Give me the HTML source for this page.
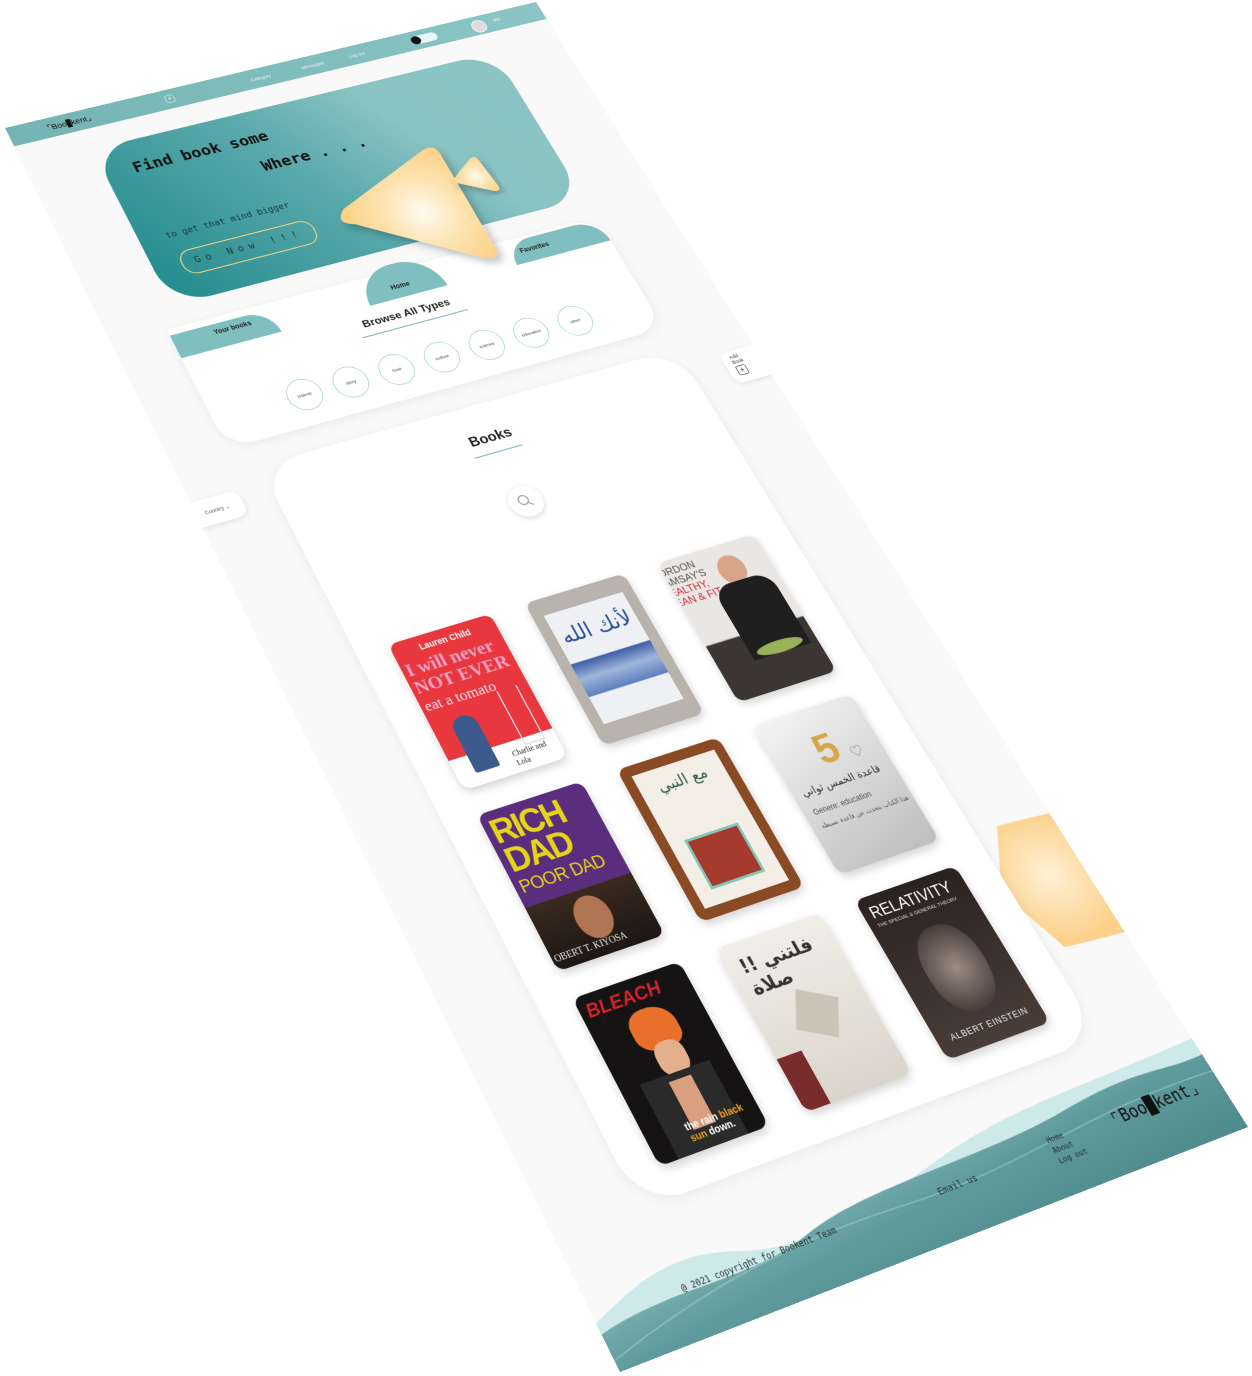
<!DOCTYPE html>
<html><head><meta charset="utf-8">
<style>
html,body{margin:0;padding:0;}
body{width:1252px;height:1376px;overflow:hidden;background:#fff;position:relative;font-family:"Liberation Sans","Noto Sans CJK SC",sans-serif;}
#pg{position:absolute;left:0;top:0;width:1000px;height:2120px;background:#f9f9f9;transform-origin:0 0;
transform:matrix3d(0.56201,-0.12588,0,0.000057855, 0.225741,0.444382,0,-0.000103799, 0,0,1,0, 5,128,0,1);overflow:hidden;}
.abs{position:absolute;}
.hdr{left:0;top:0;width:1000px;height:40px;background:linear-gradient(90deg,#74b4b4,#8cc5c5);}
.hdr span{position:absolute;font-size:9px;color:#eef;top:16px;}
.hero{left:122px;top:82px;width:752px;height:328px;border-radius:70px;background:linear-gradient(60deg,#238b8d 0%,#5aa9ab 45%,#8ac3c3 70%,#8cc4c4 100%);z-index:3;overflow:visible;}
.mono{font-family:"DejaVu Sans Mono","Liberation Mono",monospace;color:#111;}
.card{background:#fff;border-radius:60px;box-shadow:0 4px 18px rgba(0,0,0,.07);}
.tab{background:#7fbfbf;color:#222;font-size:12px;font-weight:bold;}
.pill{width:58px;height:58px;border:1.5px solid #7fbfbf;border-radius:50%;background:#fff;font-size:8px;color:#444;display:flex;align-items:center;justify-content:center;box-sizing:border-box;}
.bk{position:absolute;width:172px;height:249px;border-radius:14px;overflow:hidden;box-shadow:0 6px 14px rgba(0,0,0,.18);}
</style></head><body>
<div id="pg">
  <!-- header -->
  <div class="abs hdr">
    <div class="abs" style="left:68px;top:11px;font-size:15px;color:#111;">⌜Boo<b style="background:#111;color:#111;">k</b>kent⌟</div>
    <div class="abs" style="left:282px;top:12px;width:14px;height:14px;border:1.5px solid #e8f4f4;border-radius:3px;color:#fff;font-size:12px;line-height:13px;text-align:center;">+</div>
    <span style="left:440px;">Category</span>
    <span style="left:535px;">Messages</span>
    <span style="left:625px;">Log out</span>
    <div class="abs" style="left:745px;top:11px;width:50px;height:18px;border-radius:9px;background:#e9f6fb;"><div style="width:18px;height:18px;border-radius:50%;background:#111;"></div></div>
    <div class="abs" style="left:862px;top:8px;width:24px;height:24px;border-radius:50%;background:#ddd;border:2px solid #eee;"></div>
    <span style="left:905px;top:12px;color:#f4f4f4;">ahh</span>
  </div>

  <!-- hero -->
  <div class="abs hero">
    <div class="abs mono" style="left:50px;top:38px;font-size:29px;font-weight:bold;">Find book some</div>
    <div class="abs mono" style="left:258px;top:96px;font-size:29px;font-weight:bold;">Where . . .</div>
    <div class="abs mono" style="left:46px;top:188px;font-size:16px;color:#1a3a3a;">to get that mind bigger</div>
    <div class="abs mono" style="left:48px;top:233px;width:235px;height:45px;border:2.5px solid #f2cf7c;border-radius:22px;font-size:17px;letter-spacing:9px;line-height:45px;text-align:center;color:#1d3b3b;">Go Now !!!</div>
    <svg class="abs" style="left:325px;top:110px;overflow:visible" width="300" height="260">
      <defs>
        <radialGradient id="tg" cx="0.62" cy="0.5" r="0.6"><stop offset="0" stop-color="#fffaf0"/><stop offset="0.5" stop-color="#fde3b0"/><stop offset="1" stop-color="#fbd188"/></radialGradient>
        <filter id="sh"><feDropShadow dx="4" dy="10" stdDeviation="8" flood-color="#000" flood-opacity=".25"/></filter>
      </defs>
      <path d="M40 205 Q8 195 36 172 L215 100 Q246 88 245 118 L244 315 Q244 342 216 329 Z" transform="translate(-10,-50)" fill="url(#tg)" filter="url(#sh)"/>
      <path d="M245 208 Q230 212 241 199 L288 168 Q300 161 302 175 L309 232 Q310 245 297 240 Z" transform="translate(-10,-80)" fill="url(#tg)" filter="url(#sh)"/>
    </svg>
  </div>

  <!-- browse card -->
  <div class="abs card" style="left:95px;top:450px;width:780px;height:233px;border-radius:0 50px 50px 50px;z-index:2;">
    <div class="abs tab" style="left:0;top:12px;width:175px;height:45px;border-radius:0 45px 0 0;"><span class="abs" style="left:70px;top:8px;">Your books</span></div>
    <div class="abs tab" style="left:605px;top:5px;width:175px;height:45px;border-radius:45px 45px 0 0;"><span class="abs" style="left:18px;top:14px;">Favorites</span></div>
    <div class="abs tab" style="left:335px;top:-12px;width:140px;height:65px;border-radius:70px 70px 0 0;"><span class="abs" style="left:48px;top:36px;">Home</span></div>
    <div class="abs" style="left:265px;top:73px;width:240px;text-align:center;font-size:19px;font-weight:bold;color:#222;">Browse All Types</div>
    <div class="abs" style="left:295px;top:105px;width:190px;height:2px;background:#7fbfbf;"></div>
    <div class="abs pill" style="left:130px;top:148px;">islamic</div>
    <div class="abs pill" style="left:211px;top:148px;">story</div>
    <div class="abs pill" style="left:292px;top:148px;">food</div>
    <div class="abs pill" style="left:373px;top:148px;">culture</div>
    <div class="abs pill" style="left:454px;top:148px;">science</div>
    <div class="abs pill" style="left:535px;top:148px;">education</div>
    <div class="abs pill" style="left:616px;top:148px;">other</div>
  </div>

  <!-- side widgets -->
  <div class="abs" style="left:0;top:755px;width:78px;height:46px;background:#fff;border-radius:0 16px 16px 0;box-shadow:0 3px 10px rgba(0,0,0,.1);font-size:9px;color:#555;line-height:46px;padding-left:14px;box-sizing:border-box;">Country ⌄</div>
  <div class="abs" style="left:935px;top:755px;width:65px;height:60px;background:#fff;border-radius:14px 0 0 14px;box-shadow:0 3px 10px rgba(0,0,0,.1);font-size:9px;color:#333;padding:6px 0 0 14px;box-sizing:border-box;line-height:10px;">Add<br>Book<div style="width:16px;height:16px;border:1.5px solid #222;border-radius:3px;text-align:center;line-height:15px;font-size:14px;margin-top:3px;">+</div></div>

  <!-- orange blob -->
  <div class="abs" style="left:860px;top:1615px;width:210px;height:205px;background:radial-gradient(circle at 40% 45%,#fff1d6,#fcd08a 60%,#fbcf86);clip-path:polygon(25% 0,80% 5%,100% 50%,75% 100%,20% 95%,0 45%);filter:blur(2px);"></div>

  <!-- books card -->
  <div class="abs card" style="left:130px;top:725px;width:744px;height:1217px;border-radius:70px;z-index:2;">
    <div class="abs" style="left:0;top:48px;width:744px;text-align:center;font-size:24px;font-weight:bold;color:#222;">Books</div>
    <div class="abs" style="left:330px;top:88px;width:84px;height:2px;background:#7fbfbf;"></div>
    <div class="abs" style="left:343px;top:155px;width:56px;height:56px;border-radius:50%;background:#fff;box-shadow:0 3px 10px rgba(0,0,0,.15);">
      <svg width="56" height="56"><circle cx="25" cy="25" r="8" fill="none" stroke="#999" stroke-width="2"/><line x1="31" y1="31" x2="37" y2="37" stroke="#999" stroke-width="2"/></svg>
    </div>
  </div>

  <!-- books -->
  <div style="position:absolute;left:0;top:0;z-index:4;">
    <div class="bk" style="left:183px;top:1069px;background:#e8373d;">
      <div class="abs" style="left:0;top:10px;width:172px;text-align:center;color:#fff;font-weight:bold;font-size:14px;">Lauren Child</div>
      <div class="abs" style="left:6px;top:34px;font-family:'Liberation Serif',serif;font-size:30px;font-weight:bold;color:#f6a1c8;line-height:30px;">I will never<br>NOT EVER<br><span style="font-size:24px;font-weight:normal;color:#fde">eat a tomato</span></div>
      <div class="abs" style="left:0;top:200px;width:172px;height:49px;background:#fff;"></div>
      <div class="abs" style="left:30px;top:140px;width:40px;height:90px;background:#3c5b8c;border-radius:20px 20px 4px 4px;"></div>
      <div class="abs" style="left:120px;top:120px;width:30px;height:90px;border:2px solid #ddd;border-top:none;"></div>
      <div class="abs" style="left:95px;top:212px;font-size:12px;color:#222;font-family:'Liberation Serif',serif;">Charlie and Lola</div>
    </div>
    <div class="bk" style="left:414px;top:1069px;background:#b9b3ad;">
      <div class="abs" style="left:18px;top:28px;width:136px;height:190px;background:linear-gradient(#eef0f4 0 45%,#3f5fa8 46%,#9fb6da 60%,#5e7fc0 75%,#eef0f4 76%);"></div>
      <div class="abs" style="left:18px;top:50px;width:136px;text-align:center;font-size:34px;color:#2a4f9a;font-family:'DejaVu Sans',sans-serif;">لأنك الله</div>
    </div>
    <div class="bk" style="left:645px;top:1069px;background:linear-gradient(#e9e6e3 0 60%,#3b3634 61%);">
      <div class="abs" style="left:-8px;top:10px;font-size:17px;line-height:18px;color:#555;">ORDON<br>AMSAY'S<br><span style="color:#d8262f">EALTHY,<br>EAN &amp; FIT</span></div>
      <div class="abs" style="left:85px;top:20px;width:45px;height:50px;border-radius:50%;background:#d9a58a;"></div>
      <div class="abs" style="left:60px;top:65px;width:100px;height:130px;background:#1f1f1f;border-radius:30px 30px 0 0;"></div>
      <div class="abs" style="left:70px;top:175px;width:80px;height:20px;border-radius:50%;background:#9bb05a;"></div>
    </div>

    <div class="bk" style="left:183px;top:1359px;background:#5a2d7d;">
      <div class="abs" style="left:8px;top:10px;font-size:52px;line-height:46px;font-weight:bold;color:#e6d41a;letter-spacing:-3px;">RICH<br>DAD</div>
      <div class="abs" style="left:8px;top:105px;font-size:27px;color:#e6d41a;letter-spacing:-1px;">POOR DAD</div>
      <div class="abs" style="left:0;top:150px;width:172px;height:99px;background:linear-gradient(#3a2a1f,#1d1613);"></div>
      <div class="abs" style="left:60px;top:160px;width:55px;height:65px;border-radius:50%;background:#b07552;"></div>
      <div class="abs" style="left:4px;top:225px;font-size:14px;color:#eee;font-family:'Liberation Serif',serif;">OBERT T. KIYOSA</div>
    </div>
    <div class="bk" style="left:414px;top:1359px;background:#8a4a23;">
      <div class="abs" style="left:16px;top:16px;width:140px;height:217px;background:#f3eee6;"></div>
      <div class="abs" style="left:16px;top:30px;width:140px;text-align:center;font-size:24px;color:#2e5b3a;font-family:'DejaVu Sans',sans-serif;">مع النبي</div>
      <div class="abs" style="left:40px;top:130px;width:90px;height:80px;background:#a63a2c;border:4px solid #7fc7bb;box-sizing:border-box;"></div>
    </div>
    <div class="bk" style="left:645px;top:1359px;background:linear-gradient(160deg,#f4f4f4,#bdbdbd);">
      <div class="abs" style="left:70px;top:30px;font-size:64px;font-weight:bold;color:#d7a64a;">5</div>
      <div class="abs" style="left:120px;top:70px;font-size:20px;color:#888;">♡</div>
      <div class="abs" style="left:15px;top:110px;font-size:16px;color:#333;font-family:'DejaVu Sans',sans-serif;">قاعدة الخمس ثواني</div>
      <div class="abs" style="left:15px;top:145px;font-size:12px;color:#555;">Genere: education</div>
      <div class="abs" style="left:15px;top:170px;font-size:10px;color:#555;font-family:'DejaVu Sans',sans-serif;">هذا الكتاب يتحدث عن قاعدة بسيطة</div>
    </div>

    <div class="bk" style="left:183px;top:1650px;background:#151313;">
      <div class="abs" style="left:10px;top:8px;font-size:28px;font-weight:bold;color:#d2232a;font-style:italic;">BLEACH</div>
      <div class="abs" style="left:55px;top:45px;width:70px;height:60px;background:#e8702a;border-radius:40% 50% 30% 40%;"></div>
      <div class="abs" style="left:70px;top:95px;width:45px;height:50px;background:#e4b08c;border-radius:40%;"></div>
      <div class="abs" style="left:30px;top:140px;width:110px;height:110px;background:#2a2a2a;"></div>
      <div class="abs" style="left:70px;top:150px;width:35px;height:70px;background:#d9a07f;"></div>
      <div class="abs" style="left:60px;top:205px;font-size:14px;font-weight:bold;color:#fff;">the rain <span style="color:#f0a020">black sun</span> down.</div>
    </div>
    <div class="bk" style="left:414px;top:1650px;background:linear-gradient(180deg,#f1eee8,#d9d5cb);">
      <div class="abs" style="left:20px;top:20px;font-size:28px;font-weight:bold;color:#333;font-family:'DejaVu Sans',sans-serif;">!! فلتني صلاة</div>
      <div class="abs" style="left:60px;top:100px;width:60px;height:60px;background:#c9c4b6;transform:rotate(30deg);"></div>
      <div class="abs" style="left:0;top:170px;width:40px;height:79px;background:#7a2b2b;"></div>
    </div>
    <div class="bk" style="left:645px;top:1650px;background:linear-gradient(#2b2220,#4a3d38);">
      <div class="abs" style="left:12px;top:12px;font-size:24px;color:#fff;">RELATIVITY</div>
      <div class="abs" style="left:12px;top:40px;font-size:8px;color:#ddd;">THE SPECIAL &amp; GENERAL THEORY</div>
      <div class="abs" style="left:40px;top:70px;width:95px;height:130px;border-radius:45%;background:radial-gradient(circle at 50% 50%,#9c8d83,#5e514b 60%,#332a27);"></div>
      <div class="abs" style="left:22px;top:215px;font-size:13px;color:#eee;letter-spacing:1px;">ALBERT EINSTEIN</div>
    </div>
  </div>

  <!-- footer -->
  <svg class="abs" style="left:0;top:1975px;z-index:5" width="1000" height="145" viewBox="0 0 1000 145">
    <defs><linearGradient id="fg" x1="0" y1="0" x2="1" y2="1"><stop offset="0" stop-color="#8dbfc0"/><stop offset="0.5" stop-color="#5f9a9c"/><stop offset="1" stop-color="#4f8a8d"/></linearGradient></defs>
    <path d="M0 80 C80 50 140 30 230 60 S420 70 560 40 S820 20 1000 10 L1000 145 L0 145Z" fill="#c9e7e8" opacity=".9"/>
    <path d="M0 95 C120 70 220 100 330 70 S620 60 760 40 S930 40 1000 35 L1000 145 L0 145Z" fill="url(#fg)"/>
    <path d="M0 130 C150 90 300 70 480 80 S800 50 1000 60" fill="none" stroke="#a9d3d4" stroke-width="2" opacity=".5"/>
  </svg>
  <div class="abs mono" style="left:130px;top:2046px;font-size:12px;color:#1d2f30;z-index:6;">@ 2021 copyright for Bookent Team</div>
  <div class="abs mono" style="left:530px;top:2048px;font-size:13px;color:#1d2f30;z-index:6;">Email us</div>
  <div class="abs mono" style="left:715px;top:2036px;font-size:11px;line-height:15px;color:#1d2f30;z-index:6;">Home<br>About<br>Log out</div>
  <div class="abs mono" style="left:820px;top:2034px;font-size:24px;color:#111;z-index:6;">⌜Boo<b style="background:#111;">k</b>kent⌟</div>
</div>
</body></html>
